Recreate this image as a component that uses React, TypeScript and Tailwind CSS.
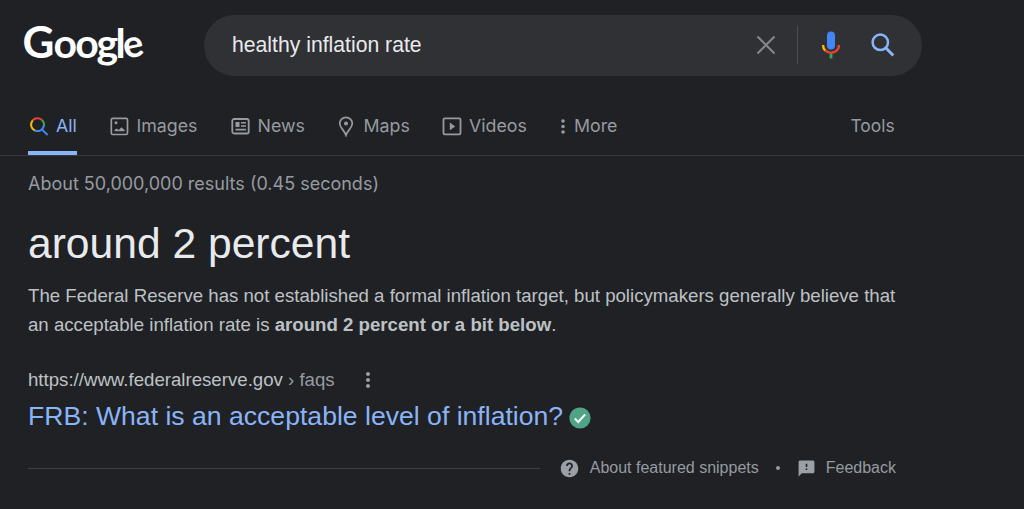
import type { ReactNode } from 'react'
import { MdHelp, MdFeedback, MdMoreVert } from 'react-icons/md'

const tabs: { name: string; icon: ReactNode; className: string }[] = [
  {
    name: 'Images',
    className: 'ml-[33px] w-[88px] gap-[7.5px]',
    icon: (
      <svg width="19" height="19" viewBox="0 0 19 19" fill="none" className="shrink-0">
        <rect x="1.3" y="1.3" width="16.2" height="16.2" rx="1.5" stroke="currentColor" strokeWidth="1.7" />
        <circle cx="6" cy="5.8" r="1.5" fill="currentColor" />
        <path d="M4.5 14.3v-1.2l2.2-1.6 2 1.4 2.7-2.6 3.2 2.8v1.2z" fill="currentColor" />
      </svg>
    ),
  },
  {
    name: 'News',
    className: 'ml-[33px] w-[73px] gap-[7.5px]',
    icon: (
      <svg width="19" height="19" viewBox="0 0 19 19" fill="none" className="shrink-0">
        <rect x="1.3" y="2" width="16.4" height="14.5" rx="1.8" stroke="currentColor" strokeWidth="1.8" />
        <path d="M4.5 5h4v5h-4zM10 5h5v1.6h-5zM10 8.2h5v1.6h-5zM4.5 11.8H15v1.7H4.5z" fill="currentColor" />
      </svg>
    ),
  },
  {
    name: 'Maps',
    className: 'ml-[34px] w-[71px] gap-[9.5px]',
    icon: (
      <svg width="16" height="21" viewBox="0 0 16 21" fill="none" className="mt-px shrink-0">
        <path d="M8 1.3a6.3 6.3 0 0 0-6.3 6.2c0 4.3 4.6 6.4 6.3 11.8 1.7-5.4 6.3-7.5 6.3-11.8A6.3 6.3 0 0 0 8 1.3z" stroke="currentColor" strokeWidth="1.7" />
        <circle cx="8" cy="7.5" r="2" fill="currentColor" />
      </svg>
    ),
  },
  {
    name: 'Videos',
    className: 'ml-[33px] w-[84px] gap-[7px]',
    icon: (
      <svg width="20" height="19" viewBox="0 0 20 19" fill="none" className="shrink-0">
        <rect x="1.5" y="1.3" width="17" height="16" rx="1.3" stroke="currentColor" strokeWidth="1.8" />
        <path d="M7.8 5.6v7.6l5.4-3.8z" fill="currentColor" />
      </svg>
    ),
  },
  {
    name: 'More',
    className: 'ml-[34px] w-[57px] gap-[8px]',
    icon: (
      <svg width="6" height="19" viewBox="0 0 6 19" fill="currentColor" className="shrink-0">
        <circle cx="3" cy="4" r="1.8" />
        <circle cx="3" cy="9.5" r="1.8" />
        <circle cx="3" cy="15" r="1.8" />
      </svg>
    ),
  },
]

function Logo() {
  return (
    <svg width="140" height="80" viewBox="0 0 140 80" className="shrink-0 overflow-visible">
      <g fill="#fff" className="font-['Lato',sans-serif] text-[41px] font-bold">
        <text x="0.6 31.6 53.2 74.4 93.4 103.6" y="53 53 53 53 53 54" rotate="0 0 0 0 0 -12">
          <tspan className="text-[44px]">G</tspan>oogl<tspan className="text-[38px]">e</tspan>
        </text>
      </g>
    </svg>
  )
}

function SearchBar() {
  return (
    <div className="ml-[42px] flex h-[61px] w-[718px] items-center rounded-full bg-[#303134] pr-[27px] pl-7">
      <span className="flex-1 text-[21.2px] text-[#e8eaed]">healthy inflation rate</span>
      <svg width="20" height="20" viewBox="0 0 20 20" stroke="#82868a" strokeWidth="2.2">
        <path d="M1.5 1.5l17 17M18.5 1.5l-17 17" />
      </svg>
      <div className="ml-[21px] h-[38px] w-px bg-[#4b4d51]" />
      <svg width="20" height="28" viewBox="0 0 20 28" fill="none" className="ml-[23px]">
        <rect x="6" y="0.5" width="8" height="18" rx="4" fill="#4285f4" />
        <path d="M2 14c0 2.3.9 4.2 2.3 5.6" stroke="#fbbc04" strokeWidth="2.4" />
        <path d="M4.3 19.4A8 8 0 0 0 18 14" stroke="#ea4335" strokeWidth="2.4" />
        <path d="M10 23v4.5" stroke="#34a853" strokeWidth="2.8" />
      </svg>
      <svg width="24" height="25" viewBox="0 0 24 25" fill="none" stroke="#8ab4f8" className="ml-[30px]">
        <circle cx="9.3" cy="9.3" r="7.7" strokeWidth="2.5" />
        <path d="M14.7 14.8l7.6 7.7" strokeWidth="3" />
      </svg>
    </div>
  )
}

function App() {
  return (
    <div className="h-[509px] w-[1024px] overflow-hidden bg-[#202124] font-['Liberation_Sans',Arial,sans-serif] whitespace-nowrap">
      <header className="flex h-[90px] items-center pl-[22px]">
        <Logo />
        <SearchBar />
      </header>

      <nav className="flex h-[66px] border-b border-[#37393c] pt-[11px] pl-[28px] font-['Inter',sans-serif] text-[17.8px] text-[#969ba1]">
        <div className="flex w-[49px] items-center border-b-4 border-[#8ab4f8] text-[#8ab4f8]">
          <svg width="20" height="20" viewBox="0 0 20 20" fill="none" strokeWidth="2" className="ml-[1px] mt-[2px] shrink-0">
            <path d="M3.7 3.3A6.5 6.5 0 0 1 12.8 3.1" stroke="#ea4335" />
            <path d="M12.8 3.1A6.5 6.5 0 0 1 14.8 9.5" stroke="#34a853" />
            <path d="M3.7 3.3A6.5 6.5 0 0 0 5.8 13.5" stroke="#fbbc04" />
            <path d="M5.8 13.5A6.5 6.5 0 0 0 14.9 8.5M12.8 12.4l5.8 5.6" stroke="#4285f4" />
          </svg>
          <span className="ml-[7px]">All</span>
        </div>
        {tabs.map((tab) => (
          <div key={tab.name} className={`flex items-center pb-1 ${tab.className}`}>
            {tab.icon}
            <span>{tab.name}</span>
          </div>
        ))}
        <div className="ml-[233.5px] flex items-center pb-1 text-[17.4px]">Tools</div>
      </nav>

      <main className="w-[896px] pl-[28px]">
        <p className="pt-4 font-['Inter',sans-serif] text-[18px] leading-6 text-[#969ba1]">
          About 50,000,000 results (0.45 seconds)
        </p>
        <h1 className="mt-[21px] text-[42.6px] leading-[52px] text-[#e8eaed]">around 2 percent</h1>
        <p className="mt-3 text-[18.65px] leading-[29px] text-[#bdc1c6]">
          The Federal Reserve has not established a formal inflation target, but policymakers generally believe that
          <br />
          an acceptable inflation rate is <b>around 2 percent or a bit below</b>.
        </p>

        <div className="mt-[29px] flex h-6 items-center text-[18.65px] text-[#bdc1c6]">
          <span>
            https://www.federalreserve.gov<span className="text-[#969ba1]"> › faqs</span>
          </span>
          <MdMoreVert className="ml-[21px] text-[24px] text-[#9aa0a6]" />
        </div>
        <div className="mt-[7px] flex h-9 items-center text-[26.6px] text-[#8ab4f8]">
          <a>FRB: What is an acceptable level of inflation?</a>
          <svg width="22" height="22" viewBox="0 0 22 22" fill="none" className="mt-px ml-[6px]">
            <circle cx="11" cy="11" r="10.6" fill="#4fa487" />
            <path d="M5.8 11.5l3.4 3.5 7-7.6" stroke="#fff" strokeWidth="2" />
          </svg>
        </div>

        <div className="mt-[21px] flex h-6 items-center text-[16px] text-[#969ba1]">
          <div className="h-px flex-1 bg-[#3c4043]" />
          <MdHelp className="ml-[19px] text-[21px] text-[#9aa0a6]" />
          <span className="ml-[10px]">About featured snippets</span>
          <span className="mx-[17px] size-1 rounded-full bg-[#969ba1]" />
          <MdFeedback className="text-[19px] text-[#9aa0a6]" />
          <span className="ml-[10px]">Feedback</span>
        </div>
      </main>
    </div>
  )
}

export default App
